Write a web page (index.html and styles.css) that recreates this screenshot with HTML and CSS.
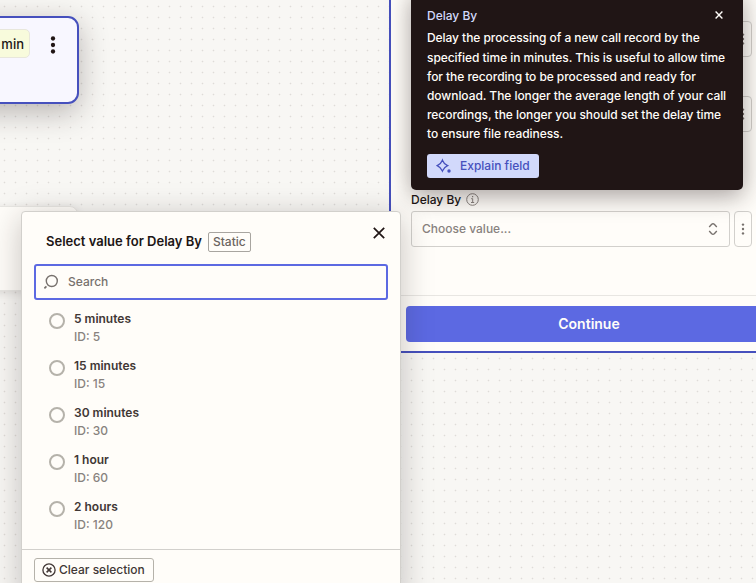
FILE: index.html
```html
<!DOCTYPE html>
<html lang="en">
<head>
<meta charset="utf-8">
<title>Delay By</title>
<link rel="stylesheet" href="styles.css">
</head>
<body>
<main class="canvas">
  <section class="node node-active">
    <span class="tag">min</span>
    <svg class="node-menu" width="6" height="18" viewBox="0 0 6 18" fill="#201515"><circle cx="3" cy="2.5" r="2.15"/><circle cx="3" cy="9" r="2.15"/><circle cx="3" cy="15.5" r="2.15"/></svg>
  </section>
  <section class="node node-next"></section>

  <aside class="panel">
    <div class="fields">
      <div class="row ghost"><div class="select"></div><button class="more"><svg width="4" height="12" viewBox="0 0 4 12"><circle cx="2" cy="1.6" r="1.2"/><circle cx="2" cy="6" r="1.2"/><circle cx="2" cy="10.4" r="1.2"/></svg></button></div>
      <div class="row ghost"><div class="select"></div><button class="more"><svg width="4" height="12" viewBox="0 0 4 12"><circle cx="2" cy="1.6" r="1.2"/><circle cx="2" cy="6" r="1.2"/><circle cx="2" cy="10.4" r="1.2"/></svg></button></div>
      <div class="label"><span>Delay By</span>
        <svg width="13" height="13" viewBox="0 0 13 13" fill="none" stroke="#88827e"><circle cx="6.5" cy="6.5" r="5.8"/><path d="M5.2 5.7h1.5v3.8M5 9.5h3.2"/><path d="M6 3.6h1.2" stroke-width="1.2"/></svg>
      </div>
      <div class="row">
        <div class="select"><span>Choose value...</span>
          <svg width="10" height="14" viewBox="0 0 10 14" fill="none" stroke="#77716d" stroke-width="1.4"><path d="M1.2 5 L3.7 2.3 Q5 1.1 6.3 2.3 L8.8 5M1.2 9 L3.7 11.7 Q5 12.9 6.3 11.7 L8.8 9"/></svg>
        </div>
        <button class="more"><svg width="4" height="12" viewBox="0 0 4 12"><circle cx="2" cy="1.6" r="1.2"/><circle cx="2" cy="6" r="1.2"/><circle cx="2" cy="10.4" r="1.2"/></svg></button>
      </div>
    </div>
    <footer class="panel-footer"><button class="continue">Continue</button></footer>
  </aside>

  <div class="tooltip">
    <header class="tip-head"><span>Delay By</span>
      <svg width="8" height="8" viewBox="0 0 8 8" stroke="#fffdf9" stroke-width="1.4"><path d="M.6.6l6.8 6.8M7.4.6L.6 7.4"/></svg>
    </header>
    <p class="tip-text">Delay the processing of a new call record by the<br>specified time in minutes. This is useful to allow time<br>for the recording to be processed and ready for<br>download. The longer the average length of your call<br>recordings, the longer you should set the delay time<br>to ensure file readiness.</p>
    <button class="explain">
      <svg width="16" height="16" viewBox="0 0 16 16" fill="none" stroke="#4650bd" stroke-width="1.3"><path d="M6.4 2.2 Q7.8 5.9 11.6 7.6 Q7.8 9.3 6.4 13 Q5 9.3 1.2 7.6 Q5 5.9 6.4 2.2Z"/><circle cx="13" cy="13" r="1.7" fill="#4650bd" stroke="none"/></svg>
      <span>Explain field</span>
    </button>
  </div>

  <div class="popover">
    <header class="pop-head">
      <h2>Select value for Delay By</h2><span class="badge">Static</span>
      <svg class="close" width="12" height="12" viewBox="0 0 12 12" stroke="#201515" stroke-width="1.7"><path d="M.8.8l10.4 10.4M11.2.8L.8 11.2"/></svg>
    </header>
    <div class="search">
      <svg width="16" height="16" viewBox="0 0 16 16" fill="none" stroke="#77716d" stroke-width="1.4"><circle cx="7.8" cy="7" r="5.5"/><path d="M2.4 12.4L.4 14.4" stroke-width="1.7"/></svg>
      <span>Search</span>
    </div>
    <ul class="options">
      <li><i class="radio"></i><div><b>5 minutes</b><small>ID: 5</small></div></li>
      <li><i class="radio"></i><div><b>15 minutes</b><small>ID: 15</small></div></li>
      <li><i class="radio"></i><div><b>30 minutes</b><small>ID: 30</small></div></li>
      <li><i class="radio"></i><div><b>1 hour</b><small>ID: 60</small></div></li>
      <li><i class="radio"></i><div><b>2 hours</b><small>ID: 120</small></div></li>
    </ul>
    <footer class="pop-foot">
      <button class="clear">
        <svg width="14" height="14" viewBox="0 0 14 14" fill="none" stroke="#413735" stroke-width="1.3"><circle cx="7" cy="7" r="6.1"/><path d="M4.6 4.6l4.8 4.8M9.4 4.6L4.6 9.4" stroke-width="1.5"/></svg>
        <span>Clear selection</span>
      </button>
    </footer>
  </div>
</main>
</body>
</html>
```
FILE: styles.css
```css
* { box-sizing: border-box; }
body { margin: 0; font-family: Inter, "Liberation Sans", sans-serif; font-size: 12px; font-weight: 500; color: #201515; }
button { font: inherit; margin: 0; padding: 0; }
svg { display: block; flex: none; }

.canvas {
  position: relative; width: 756px; height: 583px; overflow: hidden;
  background: radial-gradient(circle at 4.5px 6.5px, #dedcd8 0.7px, transparent 1.1px) 0 0 / 11px 11px #f8f7f4;
}

.node { position: absolute; left: -200px; }
.node-active {
  top: 16px; width: 279px; height: 88px; border: 2px solid #4650bd; border-radius: 11px; background: #f8f7ff;
  display: flex; justify-content: flex-end; align-items: flex-start; gap: 19.5px; padding: 11px 21.5px 0 0;
  box-shadow: 0 8px 30px rgba(32, 21, 21, .3);
}
.tag { border: 1px solid #e8e7dc; border-radius: 5px; background: #f8fbdc; height: 29px; padding: 0 5px 0 20px; line-height: 28px; font-size: 13px; }
.node-menu { margin-top: 7px; }
.node-next { top: 206px; width: 278px; height: 85px; border: 1px solid #e8e7e3; border-radius: 8px; background: #fffdf9; box-shadow: 0 2px 8px rgba(32, 21, 21, .12); }

.panel {
  position: absolute; left: 389px; top: -6px; width: 400px; height: 359px;
  border: solid #4650bd; border-width: 0 0 2px 2px; background: #fffdf9; display: flex; flex-direction: column;
}
.fields { flex: 1; padding: 27px 0 0 20px; }
.row { display: flex; gap: 4px; width: 341px; height: 36px; }
.ghost { margin-bottom: 39px; }
.select { flex: 1; border: 1px solid #d2d0cc; border-radius: 3px; display: flex; align-items: center; justify-content: space-between; padding: 0 11px 0 10px; color: #88827e; }
.select span { margin-top: -2px; }
.more { width: 18px; border: 1px solid #d2d0cc; border-radius: 4px; background: none; display: flex; align-items: center; justify-content: center; }
.more svg { fill: #77716d; }
.label { display: flex; align-items: center; gap: 5px; height: 16px; margin: 0 0 4px; line-height: 16px; }
.label span { margin-top: 2px; }
.ghost + .label { margin-top: 59px; }
.ghost:nth-child(2) { margin-bottom: 0; }
.panel-footer { height: 56px; border-top: 1px solid #e8e6e2; padding: 10px 0 0 15px; }
.continue { display: block; width: 366px; height: 36px; padding-bottom: 1px; border: 0; border-radius: 4px; background: #5c69e2; color: #fffdf9; font-size: 14px; font-weight: 600; }

.tooltip { position: absolute; left: 411px; top: -10px; width: 332px; height: 200px; border-radius: 5px; background: #201515; color: #fffdf9; padding: 15px 16px 0; box-shadow: 0 6px 24px rgba(32, 21, 21, .4); }
.tip-head { display: flex; align-items: center; justify-content: space-between; height: 20px; padding-right: 4px; color: #d2d9fb; }
.tip-text { margin: 3.3px 0 10.5px; line-height: 19.2px; white-space: nowrap; letter-spacing: -.06px; }
.explain { display: flex; align-items: center; gap: 8px; width: 112px; height: 24px; padding: 0 0 1px 9px; border: 0; border-radius: 3px; background: #d2d9fb; color: #4650bd; white-space: nowrap; }

.popover { position: absolute; left: 21px; top: 211px; width: 380px; height: 390px; border: 1px solid #d2d0cc; border-radius: 4px; background: #fffdf9; box-shadow: 0 6px 32px rgba(32, 21, 21, .25); }
.pop-head { display: flex; align-items: center; height: 52px; padding: 8px 15px 0 24px; }
h2 { margin: -2px 0 0; font-size: 13px; font-weight: 600; white-space: nowrap; }
.badge { margin-left: 6px; height: 20px; border: 1px solid #a8a5a0; border-radius: 2px; padding: 0 4px; line-height: 18px; color: #6b6460; }
.close { margin: -19px 0 0 auto; }
.search { margin: 0 12px; height: 36px; border: 2px solid #5c69e2; border-radius: 3px; display: flex; align-items: center; gap: 8px; padding: 0 0 1px 8px; color: #77716d; }
.options { list-style: none; margin: 0; padding: 10px 0 0 27px; height: 249px; }
.options li { display: flex; gap: 9px; height: 47px; }
.radio { width: 16px; height: 16px; margin-top: 3px; border: 2px solid #b5b2aa; border-radius: 50%; }
b, small { display: block; font-size: 12px; line-height: 18px; }
b { font-weight: 600; color: #413735; }
small { color: #88827e; font-weight: 500; }
.pop-foot { border-top: 1px solid #d2d0cc; padding: 8px 12px; }
.clear { display: flex; align-items: center; gap: 3px; width: 120px; height: 24px; padding: 0 0 1px 7px; border: 1px solid #b5b2aa; border-radius: 3px; background: none; color: #413735; white-space: nowrap; }
```
